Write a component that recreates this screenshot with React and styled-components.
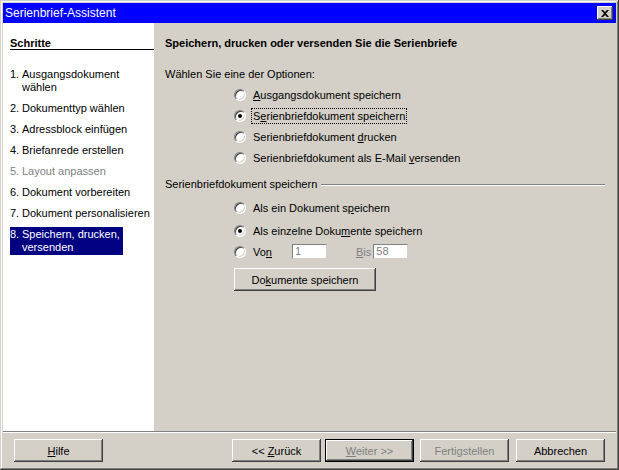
import React from 'react';
import styled, { createGlobalStyle, css } from 'styled-components';

const GlobalStyle = createGlobalStyle`
  html, body { margin: 0; padding: 0; background: #d4d0c8; }
  body { font-family: "Liberation Sans", Arial, sans-serif; font-size: 11px; }
`;

const FACE = '#d4d0c8';

const Window = styled.div`
  width: 619px;
  height: 470px;
  box-sizing: border-box;
  padding: 3px;
  display: flex;
  flex-direction: column;
  background: ${FACE};
  box-shadow: inset -1px -1px #404040, inset 1px 1px ${FACE},
    inset -2px -2px #808080, inset 2px 2px #fff;
`;

const TitleBar = styled.div`
  height: 20px;
  background: #0000ff;
  color: #fff;
  display: flex;
  align-items: center;
  justify-content: space-between;
  padding: 0 3px 0 2px;
  font-size: 12px;
`;

const CloseButton = styled.div`
  width: 16px;
  height: 14px;
  background: ${FACE};
  display: flex;
  align-items: center;
  justify-content: center;
  box-shadow: inset -1px -1px #404040, inset 1px 1px #fff,
    inset -2px -2px #808080, inset 2px 2px ${FACE};
`;

const Body = styled.div`
  flex: 1;
  display: flex;
`;

const Sidebar = styled.div`
  width: 151px;
  background: #fff;
  padding: 14px 0 0 7px;
  box-sizing: border-box;
`;

const SideHeading = styled.div`
  font-weight: bold;
  line-height: 12px;
  border-bottom: 1px solid #000;
`;

const StepList = styled.div`
  display: flex;
  flex-direction: column;
  gap: 8px;
  margin-top: 18px;
`;

const Step = styled.div`
  display: flex;
  line-height: 13px;
  color: ${p => (p.disabled ? '#808080' : '#000')};
  ${p => p.active && css`
    background: #000080;
    color: #fff;
    width: 113px;
    padding: 1px 0;
    margin-top: -1px;
  `}
`;

const StepNum = styled.span`
  width: 12px;
  flex-shrink: 0;
`;

const Content = styled.div`
  flex: 1;
  padding: 14px 11px 0 11px;
`;

const Heading = styled.div`
  font-weight: bold;
  line-height: 13px;
`;

const Prompt = styled.div`
  line-height: 13px;
  margin-top: 18px;
`;

const Options = styled.div`
  display: flex;
  flex-direction: column;
  padding-left: 69px;
  margin-top: ${p => p.top || 0}px;
`;

const OptionRow = styled.label`
  display: flex;
  align-items: center;
  height: 21px;
  margin-top: ${p => p.gap || 0}px;
`;

const RadioBox = styled.span`
  width: 12px;
  height: 12px;
  box-sizing: border-box;
  border-radius: 50%;
  border: 1px solid;
  border-color: #808080 #fff #fff #808080;
  background: #fff;
  box-shadow: inset 1px 1px #404040, inset -1px -1px ${FACE};
  display: flex;
  align-items: center;
  justify-content: center;
  flex-shrink: 0;
  margin-right: 5px;
`;

const Dot = styled.span`
  width: 4px;
  height: 4px;
  border-radius: 50%;
  background: #000;
`;

const Label = styled.span`
  padding: 1px 1px;
  border: 1px dotted ${p => (p.focused ? '#000' : 'transparent')};
  color: ${p => (p.disabled ? '#808080' : '#000')};
  margin-left: ${p => p.gap || 0}px;
`;

const GroupTitle = styled.div`
  display: flex;
  align-items: center;
  line-height: 13px;
  margin-top: 10px;
  &::after {
    content: '';
    flex: 1;
    margin-left: 4px;
    border-top: 1px solid #808080;
    border-bottom: 1px solid #fff;
  }
`;

const Field = styled.span`
  width: 35px;
  height: 15px;
  box-sizing: border-box;
  background: #fff;
  color: #808080;
  border: 1px solid;
  border-color: #808080 ${FACE} ${FACE} #808080;
  padding-left: 2px;
  line-height: 13px;
  margin-left: ${p => p.gap}px;
`;

const Button = styled.button`
  width: ${p => p.w || 89}px;
  height: 23px;
  padding: 0;
  border: none;
  background: ${FACE};
  font-family: "Liberation Sans", Arial, sans-serif;
  font-size: 11px;
  color: ${p => (p.disabled ? '#808080' : '#000')};
  box-shadow: inset -1px -1px #404040, inset 1px 1px #fff,
    inset -2px -2px #808080, inset 2px 2px ${FACE};
  ${p => p.isDefault && css`
    box-shadow: inset -1px -1px #000, inset 1px 1px #000,
      inset -2px -2px #404040, inset 2px 2px #fff,
      inset -3px -3px #808080;
  `}
`;

const BigButton = styled(Button)`
  margin-top: 6px;
`;

const Separator = styled.div`
  border-top: 1px solid #808080;
  border-bottom: 1px solid #fff;
`;

const Footer = styled.div`
  display: flex;
  align-items: center;
  padding: 6px 11px 5px 11px;
`;

const Spacer = styled.div`
  flex: 1;
`;

const ButtonGroup = styled.div`
  display: flex;
  gap: ${p => p.gap || 0}px;
  margin-left: ${p => p.ml || 0}px;
`;

const U = styled.u`
  text-decoration: underline;
  text-underline-offset: 1px;
`;

const Radio = ({ checked, children, focused, gap }) => (
  <OptionRow gap={gap}>
    <RadioBox>{checked && <Dot />}</RadioBox>
    <Label focused={focused}>{children}</Label>
  </OptionRow>
);

const steps = [
  ['1.', 'Ausgangsdokument wählen'],
  ['2.', 'Dokumenttyp wählen'],
  ['3.', 'Adressblock einfügen'],
  ['4.', 'Briefanrede erstellen'],
  ['5.', 'Layout anpassen', 'disabled'],
  ['6.', 'Dokument vorbereiten'],
  ['7.', 'Dokument personalisieren'],
  ['8.', 'Speichern, drucken, versenden', 'active'],
];

export default function App() {
  return (
    <>
      <GlobalStyle />
      <Window>
        <TitleBar>
          <span>Serienbrief-Assistent</span>
          <CloseButton>
            <svg width="8" height="7" viewBox="0 0 8 7">
              <path d="M0 0h2l2 2 2-2h2L5 3.5 8 7H6L4 5 2 7H0l3-3.5z" fill="#000" />
            </svg>
          </CloseButton>
        </TitleBar>
        <Body>
          <Sidebar>
            <SideHeading>Schritte</SideHeading>
            <StepList>
              {steps.map(([n, t, state]) => (
                <Step key={n} active={state === 'active'} disabled={state === 'disabled'}>
                  <StepNum>{n}</StepNum>
                  <span>{t}</span>
                </Step>
              ))}
            </StepList>
          </Sidebar>
          <Content>
            <Heading>Speichern, drucken oder versenden Sie die Serienbriefe</Heading>
            <Prompt>Wählen Sie eine der Optionen:</Prompt>
            <Options top={3}>
              <Radio><U>A</U>usgangsdokument speichern</Radio>
              <Radio checked focused>S<U>e</U>rienbriefdokument speichern</Radio>
              <Radio>Serienbriefdokument <U>d</U>rucken</Radio>
              <Radio>Serienbriefdokument als E-Mail <U>v</U>ersenden</Radio>
            </Options>
            <GroupTitle>Serienbriefdokument speichern</GroupTitle>
            <Options top={6}>
              <Radio>Als ein Dokument s<U>p</U>eichern</Radio>
              <Radio checked gap={2}>Als einzelne Doku<U>m</U>ente speichern</Radio>
              <OptionRow>
                <RadioBox />
                <Label>Vo<U>n</U></Label>
                <Field gap={18}>1</Field>
                <Label disabled gap={27}><U>B</U>is</Label>
                <Field gap={0}>58</Field>
              </OptionRow>
              <BigButton w={142}>Do<U>k</U>umente speichern</BigButton>
            </Options>
          </Content>
        </Body>
        <Separator />
        <Footer>
          <Button><U>H</U>ilfe</Button>
          <Spacer />
          <ButtonGroup gap={4}>
            <Button>&lt;&lt; <U>Z</U>urück</Button>
            <Button isDefault disabled><U>W</U>eiter &gt;&gt;</Button>
          </ButtonGroup>
          <ButtonGroup gap={7} ml={6}>
            <Button disabled>Fertigstellen</Button>
            <Button>Abbrechen</Button>
          </ButtonGroup>
        </Footer>
      </Window>
    </>
  );
}
